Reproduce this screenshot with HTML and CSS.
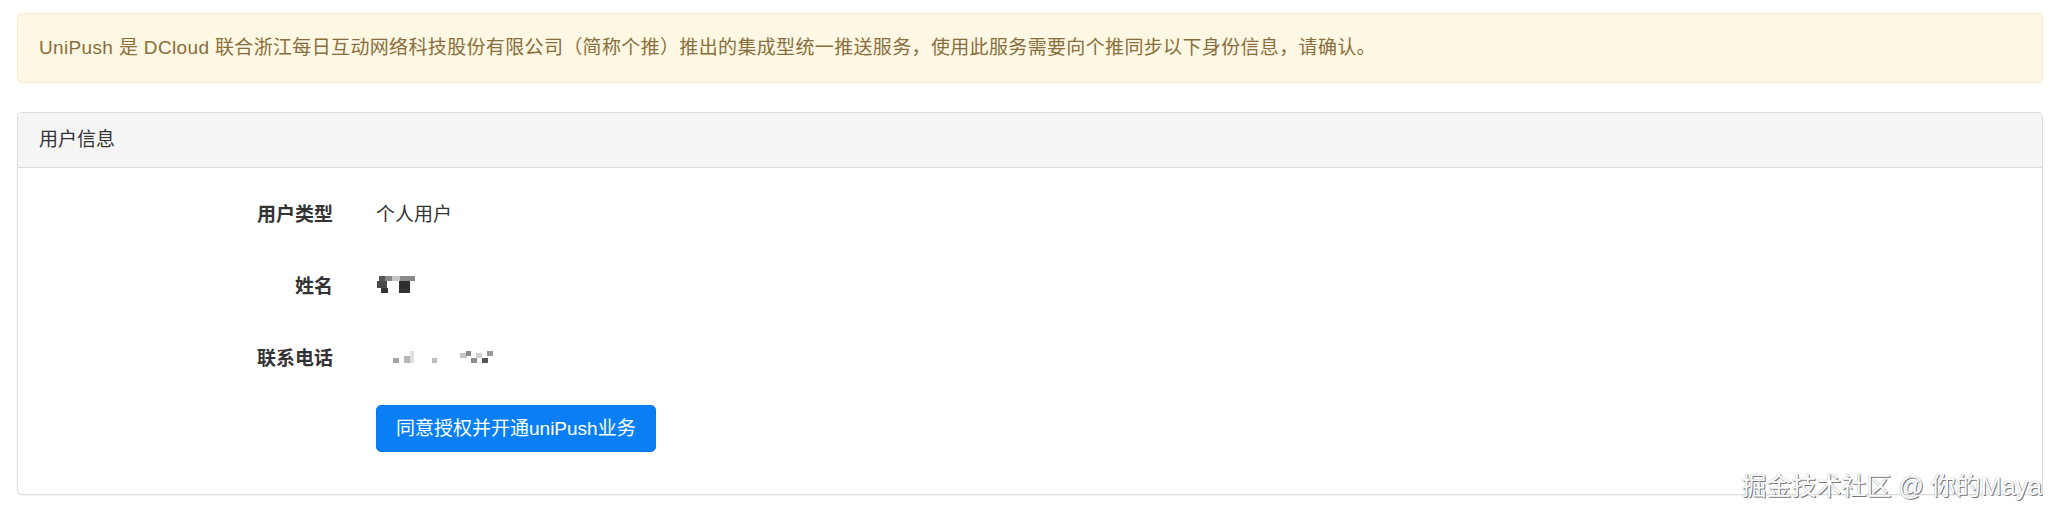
FILE: index.html
```html
<!DOCTYPE html>
<html lang="zh-CN">
<head>
<meta charset="utf-8">
<title>UniPush</title>
<link rel="stylesheet" href="styles.css">
</head>
<body>
<div class="page">
  <div class="alert">UniPush 是 DCloud 联合浙江每日互动网络科技股份有限公司（简称个推）推出的集成型统一推送服务，使用此服务需要向个推同步以下身份信息，请确认。</div>
  <div class="panel">
    <div class="panel-heading">用户信息</div>
    <div class="panel-body">
      <div class="row">
        <div class="label">用户类型</div>
        <div class="value">个人用户</div>
      </div>
      <div class="row">
        <div class="label">姓名</div>
        <div class="value">
          <svg class="mosaic-name" width="40" height="18" viewBox="0 0 40 18">
            <rect x="3" y="0" width="6" height="5" fill="#555"/>
            <rect x="9" y="0" width="7" height="5" fill="#888"/>
            <rect x="16" y="0" width="8" height="5" fill="#c4c4c4"/>
            <rect x="24" y="0" width="15" height="5" fill="#8a8a8a"/>
            <rect x="1" y="5" width="10" height="7" fill="#4a4a4a"/>
            <rect x="23" y="5" width="11" height="7" fill="#2e2e2e"/>
            <rect x="5" y="12" width="7" height="5" fill="#333"/>
            <rect x="23" y="12" width="11" height="5" fill="#333"/>
          </svg>
        </div>
      </div>
      <div class="row">
        <div class="label">联系电话</div>
        <div class="value">
          <svg class="mosaic-phone" width="120" height="18" viewBox="0 0 120 18">
            <rect x="17" y="10" width="6" height="5" fill="#a5a5a5"/>
            <rect x="28" y="8" width="6" height="7" fill="#b5b5b5"/>
            <rect x="34" y="3" width="4" height="12" fill="#e0e0e0"/>
            <rect x="56" y="10" width="5" height="5" fill="#bdbdbd"/>
            <rect x="84" y="5" width="7" height="5" fill="#c4c4c4"/>
            <rect x="90" y="3" width="5" height="5" fill="#8c8c8c"/>
            <rect x="95" y="10" width="6" height="5" fill="#8c8c8c"/>
            <rect x="100" y="5" width="6" height="5" fill="#d0d0d0"/>
            <rect x="106" y="10" width="6" height="5" fill="#555"/>
            <rect x="111" y="3" width="6" height="5" fill="#9a9a9a"/>
          </svg>
        </div>
      </div>
      <div class="row actions">
        <div class="label"></div>
        <div class="value"><button class="btn-primary" type="button">同意授权并开通uniPush业务</button></div>
      </div>
    </div>
  </div>
  <div class="watermark">掘金技术社区 @ 你的Maya</div>
</div>
</body>
</html>
```

FILE: styles.css
```css
html, body {
  margin: 0;
  padding: 0;
  background: #fff;
}

body {
  font-family: "Liberation Sans", "Noto Sans CJK SC", sans-serif;
  font-size: 19px;
  color: #333;
}

.page {
  position: relative;
  padding: 13px 14px 0 17px;
  height: 505px;
}

.alert {
  background: #fcf8e3;
  border: 1px solid #faebcc;
  border-radius: 5px;
  color: #8a6d3b;
  padding: 20px 21px;
  line-height: 28px;
  letter-spacing: 0.35px;
  margin-bottom: 29px;
}

.panel {
  border: 1px solid #dcdcdc;
  border-radius: 5px;
  box-shadow: 0 1px 1px rgba(0, 0, 0, 0.05);
  background: #fff;
}

.panel-heading {
  background: #f5f5f5;
  border-bottom: 1px solid #dcdcdc;
  border-radius: 4px 4px 0 0;
  padding: 13px 21px;
  line-height: 28px;
  color: #333;
}

.panel-body {
  padding: 21px 0 42px 0;
}

.row {
  display: grid;
  grid-template-columns: 315px 1fr;
  column-gap: 43px;
  align-items: center;
  height: 47px;
  margin-bottom: 25px;
}

.row.actions {
  margin-bottom: 0;
}

.label {
  text-align: right;
  font-weight: bold;
  color: #333;
}

.value {
  display: flex;
  align-items: center;
  color: #333;
}

.mosaic-name {
  display: block;
  margin-top: 1px;
}

.mosaic-phone {
  display: block;
}

.btn-primary {
  font-family: "Liberation Sans", "Noto Sans CJK SC", sans-serif;
  font-size: 19px;
  line-height: 27px;
  color: #fff;
  background: #0a7ff5;
  border: 1px solid #0a7aef;
  border-radius: 5px;
  padding: 9px 19px;
  cursor: pointer;
}

.watermark {
  position: absolute;
  right: 15px;
  top: 471px;
  font-size: 25px;
  line-height: 30px;
  color: #fff;
  text-shadow: 1px 1px 0 #777, 0 0 1px #888;
  white-space: nowrap;
}
```
